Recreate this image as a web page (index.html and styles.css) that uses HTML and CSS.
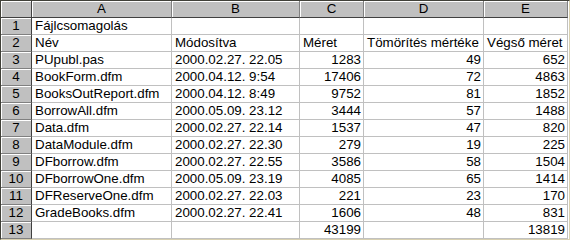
FILE: index.html
```html
<!DOCTYPE html>
<html>
<head>
<meta charset="utf-8">
<link rel="stylesheet" href="styles.css">
</head>
<body>
<div class="sheet">
  <div class="hdr corner"></div><div class="hdr">A</div><div class="hdr">B</div><div class="hdr">C</div><div class="hdr">D</div><div class="hdr">E</div>

  <div class="rh">1</div><div class="c">Fájlcsomagolás</div><div class="c"></div><div class="c"></div><div class="c"></div><div class="c"></div>
  <div class="rh">2</div><div class="c">Név</div><div class="c">Módosítva</div><div class="c">Méret</div><div class="c">Tömörítés mértéke</div><div class="c">Végső méret</div>
  <div class="rh">3</div><div class="c">PUpubl.pas</div><div class="c">2000.02.27. 22.05</div><div class="c n">1283</div><div class="c n">49</div><div class="c n">652</div>
  <div class="rh">4</div><div class="c">BookForm.dfm</div><div class="c">2000.04.12. 9:54</div><div class="c n">17406</div><div class="c n">72</div><div class="c n">4863</div>
  <div class="rh">5</div><div class="c">BooksOutReport.dfm</div><div class="c">2000.04.12. 8:49</div><div class="c n">9752</div><div class="c n">81</div><div class="c n">1852</div>
  <div class="rh">6</div><div class="c">BorrowAll.dfm</div><div class="c">2000.05.09. 23.12</div><div class="c n">3444</div><div class="c n">57</div><div class="c n">1488</div>
  <div class="rh">7</div><div class="c">Data.dfm</div><div class="c">2000.02.27. 22.14</div><div class="c n">1537</div><div class="c n">47</div><div class="c n">820</div>
  <div class="rh">8</div><div class="c">DataModule.dfm</div><div class="c">2000.02.27. 22.30</div><div class="c n">279</div><div class="c n">19</div><div class="c n">225</div>
  <div class="rh">9</div><div class="c">DFborrow.dfm</div><div class="c">2000.02.27. 22.55</div><div class="c n">3586</div><div class="c n">58</div><div class="c n">1504</div>
  <div class="rh">10</div><div class="c">DFborrowOne.dfm</div><div class="c">2000.05.09. 23.19</div><div class="c n">4085</div><div class="c n">65</div><div class="c n">1414</div>
  <div class="rh">11</div><div class="c">DFReserveOne.dfm</div><div class="c">2000.02.27. 22.03</div><div class="c n">221</div><div class="c n">23</div><div class="c n">170</div>
  <div class="rh">12</div><div class="c">GradeBooks.dfm</div><div class="c">2000.02.27. 22.41</div><div class="c n">1606</div><div class="c n">48</div><div class="c n">831</div>
  <div class="rh">13</div><div class="c"></div><div class="c"></div><div class="c n">43199</div><div class="c"></div><div class="c n">13819</div>
</div>
</body>
</html>
```

FILE: styles.css
```css
html, body {
  margin: 0;
  padding: 0;
  background: #ffffff;
}

.sheet {
  width: 570px;
  height: 240px;
  box-sizing: border-box;
  border-top: 1px solid #404038;
  border-left: 1px solid #404038;
  border-right: 1px solid #d8d0b0;
  border-bottom: 1px solid #d8d0b0;
  display: grid;
  grid-template-columns: 31px 140px 128px 64px 120px 84px;
  grid-auto-rows: 17px;
  font-family: "Liberation Sans", Arial, sans-serif;
  font-size: 13.33px;
  color: #000000;
  background: #ffffff;
}

.hdr, .rh {
  box-sizing: border-box;
  background: #c0c0c0;
  border-right: 1px solid #808080;
  border-bottom: 1px solid #808080;
  box-shadow: inset 1px 1px 0 #ffffff;
  display: flex;
  align-items: center;
  justify-content: center;
  line-height: 16px;
  white-space: nowrap;
}

.hdr {
  border-bottom-color: #404040;
}

.rh {
  border-right-color: #404040;
}

.corner {
  border-right-color: #404040;
}

.c {
  box-sizing: border-box;
  border-right: 1px solid #c0c0c0;
  border-bottom: 1px solid #c0c0c0;
  padding: 0 2px 0 3px;
  line-height: 16px;
  white-space: nowrap;
  overflow: visible;
  display: flex;
  align-items: center;
}

.n {
  justify-content: flex-end;
}
```
